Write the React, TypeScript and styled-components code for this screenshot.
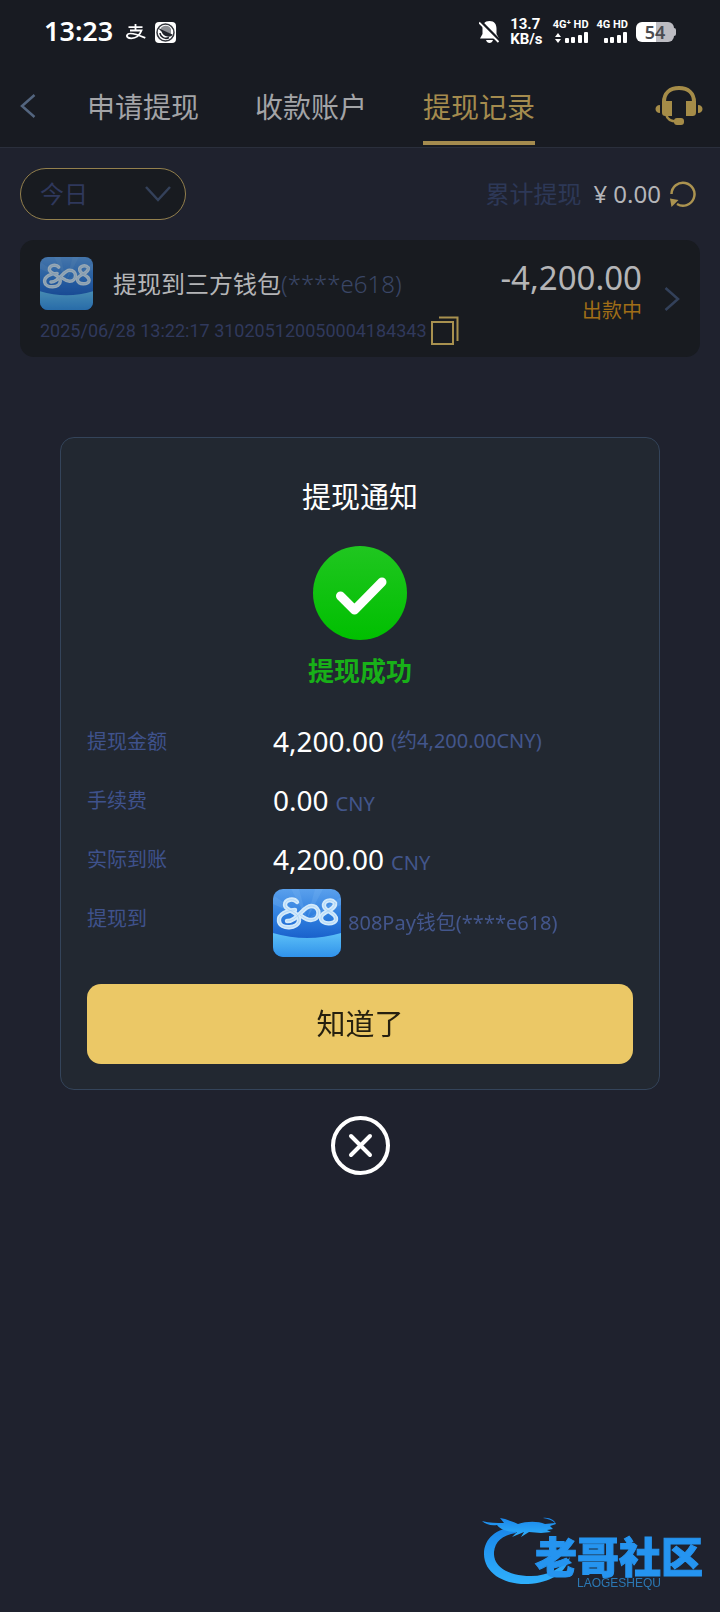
import React, { useId } from "react";
import styled, { createGlobalStyle } from "styled-components";

const GlobalStyle = createGlobalStyle`
  *, *::before, *::after { box-sizing: border-box; }
  body {
    margin: 0;
    background: #1f222e;
    font-family: "Noto Sans", "Noto Sans CJK SC", sans-serif;
    color: #b9bbbe;
  }
  button { font-family: inherit; border: 0; background: none; padding: 0; cursor: pointer; }
  svg { display: block; flex: none; }
  h2, p, dl, dd, dt { margin: 0; font-weight: 400; }
`;

const Page = styled.div`
  position: relative;
  min-height: 100vh;
`;

/* ---------- status bar ---------- */

const TopArea = styled.div`
  background: #181b22;
  border-bottom: 1px solid #2a2f3c;
`;

const StatusBar = styled.div`
  display: flex;
  align-items: center;
  justify-content: space-between;
  height: 64px;
  padding: 0 44px;
  color: #fff;
`;

const StatusGroup = styled.div<{ $gap: number }>`
  display: flex;
  align-items: center;
  gap: ${(p) => p.$gap}px;
`;

const Clock = styled.span`
  padding-bottom: 3px;
  font-size: 27px;
  line-height: 32px;
  font-weight: 600;
  margin-right: 4px;
`;

const NetSpeed = styled.span`
  font: 700 15px/15px Roboto, sans-serif;
  margin: 0 2px;
`;

const Signal = styled.span`
  display: flex;
  flex-direction: column;
  align-items: flex-end;
  gap: 2px;
  font: 700 11px/10px Roboto, sans-serif;
`;

const Battery = styled.span`
  display: flex;
  align-items: center;
`;

const BatteryBody = styled.span`
  width: 38px;
  height: 20px;
  border-radius: 6px;
  background: linear-gradient(90deg, #fff 52%, #bcbcc2 52%);
  color: #4a4b50;
  font-size: 18px;
  line-height: 20px;
  font-weight: 600;
  text-align: center;
`;

const BatteryTip = styled.span`
  width: 2px;
  height: 8px;
  border-radius: 0 2px 2px 0;
  background: #bcbcc2;
`;

/* ---------- header ---------- */

const Header = styled.header`
  display: flex;
  align-items: center;
  height: 83px;
  padding: 0 17px 0 20px;
`;

const BackButton = styled.button`
  width: 67px;
`;

const Tabs = styled.nav`
  display: flex;
  gap: 56px;
  height: 100%;
  flex: 1;
`;

const Tab = styled.button<{ $active?: boolean }>`
  display: flex;
  align-items: center;
  height: 81px;
  padding-top: 8px;
  font-size: 28px;
  line-height: 36px;
  color: ${(p) => (p.$active ? "#a48b4e" : "#a3a4a7")};
  border-bottom: 4px solid ${(p) => (p.$active ? "#a48b4e" : "transparent")};
`;

/* ---------- list ---------- */

const Main = styled.main`
  padding: 20px 20px 0;
`;

const FilterRow = styled.div`
  display: flex;
  align-items: center;
  justify-content: space-between;
  padding-right: 4px;
  margin-bottom: 20px;
`;

const DatePill = styled.button`
  display: flex;
  align-items: center;
  justify-content: space-between;
  width: 166px;
  height: 52px;
  padding: 0 14px 0 19px;
  border: 1px solid #93804d;
  border-radius: 26px;
  background: #181b20;
  font-size: 24px;
  line-height: 32px;
  color: #2f385c;
`;

const Total = styled.div`
  display: flex;
  align-items: center;
  gap: 8px;
  font-size: 24px;
  line-height: 32px;
  color: #b4b5b9;
`;

const TotalLabel = styled.span`
  margin-right: 4px;
  color: #2d3857;
`;

const Record = styled.article`
  display: flex;
  justify-content: space-between;
  padding: 17px 20px 8px;
  min-height: 117px;
  border-radius: 14px;
  background: #181b20;
`;

const RecordTitle = styled.div`
  display: flex;
  align-items: center;
  font-size: 24px;
  line-height: 32px;
  color: #b4b5b7;
`;

const RecordName = styled.span`
  margin-left: 20px;
`;

const Masked = styled.span`
  color: #3a4666;
  font-weight: 300;
`;

const RecordMeta = styled.div`
  display: flex;
  align-items: center;
  gap: 4px;
  margin-top: 6px;
  font: 400 18px/30px Roboto, "Noto Sans CJK SC", sans-serif;
  color: #30395c;
`;

const RecordRight = styled.div`
  display: flex;
  align-items: center;
  gap: 22px;
  height: 84px;
`;

const Amount = styled.div`
  display: flex;
  flex-direction: column;
  align-items: flex-end;
  padding-bottom: 16px;
  font-size: 33px;
  line-height: 40px;
  color: #b4b5b7;
`;

const State = styled.span`
  font-size: 20px;
  line-height: 26px;
  color: #a06e17;
`;

/* ---------- dialog ---------- */

const Overlay = styled.div`
  position: fixed;
  inset: 0;
  display: flex;
  flex-direction: column;
  align-items: center;
  justify-content: center;
  gap: 26px;
  padding: 0 60px;
`;

const Dialog = styled.section`
  display: flex;
  flex-direction: column;
  align-items: center;
  width: 100%;
  padding: 38px 26px 25px;
  border: 1px solid #34445a;
  border-radius: 14px;
  background: #222831;
`;

const DialogTitle = styled.h2`
  margin-bottom: 28px;
  font-size: 29px;
  line-height: 42px;
  color: #fff;
`;

const ResultText = styled.p`
  margin: 12px 0 22px;
  font-size: 26px;
  line-height: 38px;
  font-weight: 700;
  color: #18b018;
`;

const Details = styled.dl`
  width: 100%;
  margin-bottom: 27px;
`;

const DetailRow = styled.div`
  display: grid;
  grid-template-columns: 186px 1fr;
  align-items: start;
  min-height: 59px;
`;

const DetailLabel = styled.dt`
  font-size: 20px;
  line-height: 59px;
  color: #3f528c;
`;

const DetailValue = styled.dd<{ $center?: boolean }>`
  display: flex;
  align-items: ${(p) => (p.$center ? "center" : "baseline")};
  gap: 7px;
  font-size: 28px;
  line-height: 58px;
  color: #fff;
`;

const Unit = styled.span`
  font-size: 20px;
  line-height: 28px;
  color: #43568c;
`;

const ConfirmButton = styled.button`
  width: 100%;
  height: 80px;
  border-radius: 14px;
  background: #ebc866;
  font-size: 29px;
  line-height: 42px;
  color: #26200f;
`;

/* ---------- watermark ---------- */

const Watermark = styled.div`
  position: absolute;
  right: 17px;
  bottom: 24px;
  display: flex;
  align-items: flex-end;
  pointer-events: none;
`;

const Brand = styled.div`
  display: flex;
  flex-direction: column;
  margin-left: -40px;
`;

const BrandName = styled.span`
  font: 900 42px/46px "Noto Sans CJK SC", sans-serif;
  color: #2594f0;
  -webkit-text-stroke: 1px #2594f0;
`;

const BrandLatin = styled.span`
  align-self: center;
  font: 400 12px/10px "Liberation Sans", sans-serif;
  color: #2b78b4;
`;

const LogoStrokes = () => (
  <>
    <path d="M24 13C21 9 12 10 12 16c0 6 14 6 14 15 0 9-19 10-20 1C5 25 15 21 22 21" />
    <path d="M14 32C24 33 30 17 38 17c10 0 10 14 0 14-5 0-8-3-11-5" />
    <path d="M62 14c-4-5-12-2-11 3 1 6 12 6 12 13 0 6-15 6-15-1 0-7 15-7 14-15z" />
  </>
);

const WalletLogo = ({ size, dim }: { size: number; dim?: boolean }) => {
  const id = useId();
  return (
    <svg width={size} height={size} viewBox="0 0 68 68" opacity={dim ? 0.68 : 1} aria-hidden>
      <defs>
        <linearGradient id={`${id}a`} x1="0" y1="0" x2="0" y2="1">
          <stop offset="0" stopColor="#5aa0ec" />
          <stop offset="0.4" stopColor="#2f7fdf" />
          <stop offset="0.72" stopColor="#1a62cc" />
        </linearGradient>
        <linearGradient id={`${id}b`} x1="0" y1="0" x2="0" y2="1">
          <stop offset="0" stopColor="#5cc0f8" />
          <stop offset="1" stopColor="#3092ea" />
        </linearGradient>
        <clipPath id={`${id}c`}>
          <rect width="68" height="68" rx="10" />
        </clipPath>
      </defs>
      <g clipPath={`url(#${id}c)`}>
        <rect width="68" height="68" fill={`url(#${id}a)`} />
        <path d="M34 30 18 0h8zM34 30 42 0h8zM34 30 68 8v8zM34 30 0 6v9z" fill="#7cb8f5" opacity=".25" />
        <path d="M0 44Q34 54 68 44V68H0z" fill={`url(#${id}b)`} />
        <g fill="none" strokeLinecap="round">
          <g stroke="#d3eafb" strokeWidth="4.4">
            <LogoStrokes />
          </g>
          <g stroke="#9ccbf3" strokeWidth="0.6">
            <LogoStrokes />
          </g>
        </g>
      </g>
    </svg>
  );
};

const Bars = ({ arrows }: { arrows?: boolean }) => (
  <svg width={arrows ? 36 : 24} height="12" viewBox={arrows ? "-12 0 36 12" : "0 0 24 12"} fill="#fff" aria-hidden>
    {arrows && <path d="M-10 5 -7 1-4 5zM-10 7h6l-3 4z" />}
    <rect x="0" y="6" width="4" height="5" rx="1" />
    <rect x="6" y="5" width="4" height="6" rx="1" />
    <rect x="13" y="3" width="4" height="8" rx="1" />
    <rect x="19" y="0" width="4" height="11" rx="1" />
  </svg>
);

const details = [
  { label: "提现金额", value: "4,200.00", unit: "(约4,200.00CNY)", center: true },
  { label: "手续费", value: "0.00", unit: "CNY" },
  { label: "实际到账", value: "4,200.00", unit: "CNY" },
];

export default function App() {
  return (
    <Page>
      <GlobalStyle />
      <TopArea>
        <StatusBar>
          <StatusGroup $gap={9}>
            <Clock>13:23</Clock>
            <svg width="20" height="16" viewBox="0 0 20 16" fill="none" stroke="#fff" strokeWidth="1.8" aria-hidden>
              <path d="M2.500 3.200h14M9.500 0v6.500M4 6.500h11.500C13.800 11 10 14.300 5.300 14.300c-3.600 0-4.800-1.700-4.200-3.200 1.400-3.300 8.400-1.300 18.200 2.800" />
            </svg>
            <svg width="21" height="21" viewBox="0 0 21 21" aria-hidden>
              <rect width="21" height="21" rx="4" fill="#fff" />
              <circle cx="10.500" cy="10.500" r="8.500" fill="none" stroke="#33363d" strokeWidth="1.500" />
              <path d="M5 8a6 6 0 0 1 11-1v5z" fill="#8b8d92" />
              <path d="M3 6 17.500 12.500c0 1.500-2.500 2.500-5 2-3-.6-5-2-6-5z" fill="#20232a" />
              <path d="M5 11a6 6 0 0 0 9 4.500" fill="none" stroke="#20232a" strokeWidth="1.500" />
            </svg>
          </StatusGroup>
          <StatusGroup $gap={8}>
            <svg width="21" height="24" viewBox="0 0 21 24" aria-hidden>
              <path d="M10.500 1c5 0 7 3.500 7 7.500v5.500l2.500 4.500H1L3.500 14V8.500C3.500 4.500 5.500 1 10.500 1zM7 20h7c-.5 2-2 3-3.500 3S7.500 22 7 20z" fill="#fff" />
              <path d="M1 1 21 21" stroke="#181b22" strokeWidth="3" />
              <path d="M0 2.500 19.500 22" stroke="#fff" strokeWidth="1.800" />
            </svg>
            <NetSpeed>
              13.7
              <br />
              KB/s
            </NetSpeed>
            <Signal>
              <span>4G⁺ HD</span>
              <Bars arrows />
            </Signal>
            <Signal>
              <span>4G HD</span>
              <Bars />
            </Signal>
            <Battery>
              <BatteryBody>54</BatteryBody>
              <BatteryTip />
            </Battery>
          </StatusGroup>
        </StatusBar>
        <Header>
          <BackButton aria-label="返回">
            <svg width="16" height="26" viewBox="0 0 16 26" fill="none" stroke="#53657f" strokeWidth="2.500" aria-hidden>
              <path d="M14.500 2 2 13l12.500 11" />
            </svg>
          </BackButton>
          <Tabs>
            <Tab>申请提现</Tab>
            <Tab>收款账户</Tab>
            <Tab $active>提现记录</Tab>
          </Tabs>
          <button aria-label="客服">
            <svg width="48" height="42" viewBox="0 0 48 42" fill="none" aria-hidden>
              <path d="M9 20v-3C9 8 15 3 24 3s15 5 15 14v3" stroke="#a58c48" strokeWidth="4" />
              <path d="M11 29c1 5 4 7.500 11 7.500" stroke="#a58c48" strokeWidth="2.500" />
              <g fill="#a58c48">
                <path d="M7 16h10v15h-6c-3 0-4-1-4-4zM41 16H31v15h6c3 0 4-1 4-4z" />
                <path d="M5 20v8c-6 0-6-8 0-8zM43 20v8c6 0 6-8 0-8z" />
                <rect x="19" y="33" width="10" height="7" rx="3" />
              </g>
            </svg>
          </button>
        </Header>
      </TopArea>

      <Main>
        <FilterRow>
          <DatePill>
            今日
            <svg width="26" height="18" viewBox="0 0 26 18" fill="none" stroke="#34415a" strokeWidth="2.500" aria-hidden>
              <path d="M1 2 13 15 25 2" />
            </svg>
          </DatePill>
          <Total>
            <TotalLabel>累计提现</TotalLabel>
            <span>¥ 0.00</span>
            <button aria-label="刷新">
              <svg width="27" height="27" viewBox="0 0 27 27" fill="none" aria-hidden>
                <path d="M2.500 13A11.500 11.500 0 1 1 8 23" stroke="#ab9350" strokeWidth="2.500" />
                <path d="M1 17.500 9.500 19 2.500 26z" fill="#ab9350" />
              </svg>
            </button>
          </Total>
        </FilterRow>

        <Record>
          <div>
            <RecordTitle>
              <WalletLogo size={53} dim />
              <RecordName>提现到三方钱包</RecordName>
              <Masked>(****e618)</Masked>
            </RecordTitle>
            <RecordMeta>
              <span>2025/06/28 13:22:17 310205120050004184343</span>
              <button aria-label="复制">
                <svg width="28" height="30" viewBox="0 0 28 30" fill="none" stroke="#a8914f" strokeWidth="2" aria-hidden>
                  <rect x="1" y="6" width="21" height="22" />
                  <path d="M8 1.500h18.500V25" />
                </svg>
              </button>
            </RecordMeta>
          </div>
          <RecordRight>
            <Amount>
              -4,200.00
              <State>出款中</State>
            </Amount>
            <svg width="16" height="26" viewBox="0 0 16 26" fill="none" stroke="#33415a" strokeWidth="2.500" aria-hidden>
              <path d="M1.500 2 14 13 1.500 24" />
            </svg>
          </RecordRight>
        </Record>
      </Main>

      <Overlay>
        <Dialog role="dialog" aria-labelledby="notice-title">
          <DialogTitle id="notice-title">提现通知</DialogTitle>
          <svg width="94" height="94" viewBox="0 0 94 94" aria-hidden>
            <defs>
              <linearGradient id="ok" x1="0" y1="0" x2="0" y2="1">
                <stop offset="0" stopColor="#20c620" />
                <stop offset="1" stopColor="#00bf00" />
              </linearGradient>
            </defs>
            <circle cx="47" cy="47" r="47" fill="url(#ok)" />
            <path d="M27.500 50 41.500 64 69 36" fill="none" stroke="#fff" strokeWidth="9" strokeLinecap="round" strokeLinejoin="round" />
          </svg>
          <ResultText>提现成功</ResultText>
          <Details>
            {details.map((d) => (
              <DetailRow key={d.label}>
                <DetailLabel>{d.label}</DetailLabel>
                <DetailValue $center={d.center}>
                  {d.value}
                  <Unit>{d.unit}</Unit>
                </DetailValue>
              </DetailRow>
            ))}
            <DetailRow>
              <DetailLabel>提现到</DetailLabel>
              <DetailValue $center>
                <WalletLogo size={68} />
                <Unit>808Pay钱包(****e618)</Unit>
              </DetailValue>
            </DetailRow>
          </Details>
          <ConfirmButton>知道了</ConfirmButton>
        </Dialog>
        <button aria-label="关闭">
          <svg width="59" height="59" viewBox="0 0 59 59" fill="none" stroke="#fff" strokeWidth="4" strokeLinecap="round" aria-hidden>
            <circle cx="29.500" cy="29.500" r="27.500" />
            <path d="M20 20 39 39M39 20 20 39" />
          </svg>
        </button>
      </Overlay>

      <Watermark>
        <svg width="94" height="72" viewBox="0 0 94 72" aria-hidden>
          <defs>
            <linearGradient id="dragon" x1="0" y1="0" x2="0" y2="1">
              <stop offset="0" stopColor="#1a86ea" />
              <stop offset="1" stopColor="#2fb0fc" />
            </linearGradient>
          </defs>
          <g fill="url(#dragon)">
            <path d="M34 11C16 12 3 22 3 38c0 19 20 31 44 30 22-1 38-11 42-27-8 11-22 19-39 19C26 60 12 50 13 36c1-10 8-17 22-19z" />
            <path d="M1 5c8 2 14 2 22 2l-4-5c7 1 13 4 18 6 9-3 20-3 27 0l10-1c-3-3-7-4-12-5 7-1 12 3 13 6l-6 2 3 3-6 1 4 2-10 1-12-1-8 5 3-5-12 5 5-5C25 16 19 13 16 9 10 10 4 8 1 5z" />
          </g>
        </svg>
        <Brand>
          <BrandName>老哥社区</BrandName>
          <BrandLatin>LAOGESHEQU</BrandLatin>
        </Brand>
      </Watermark>
    </Page>
  );
}
